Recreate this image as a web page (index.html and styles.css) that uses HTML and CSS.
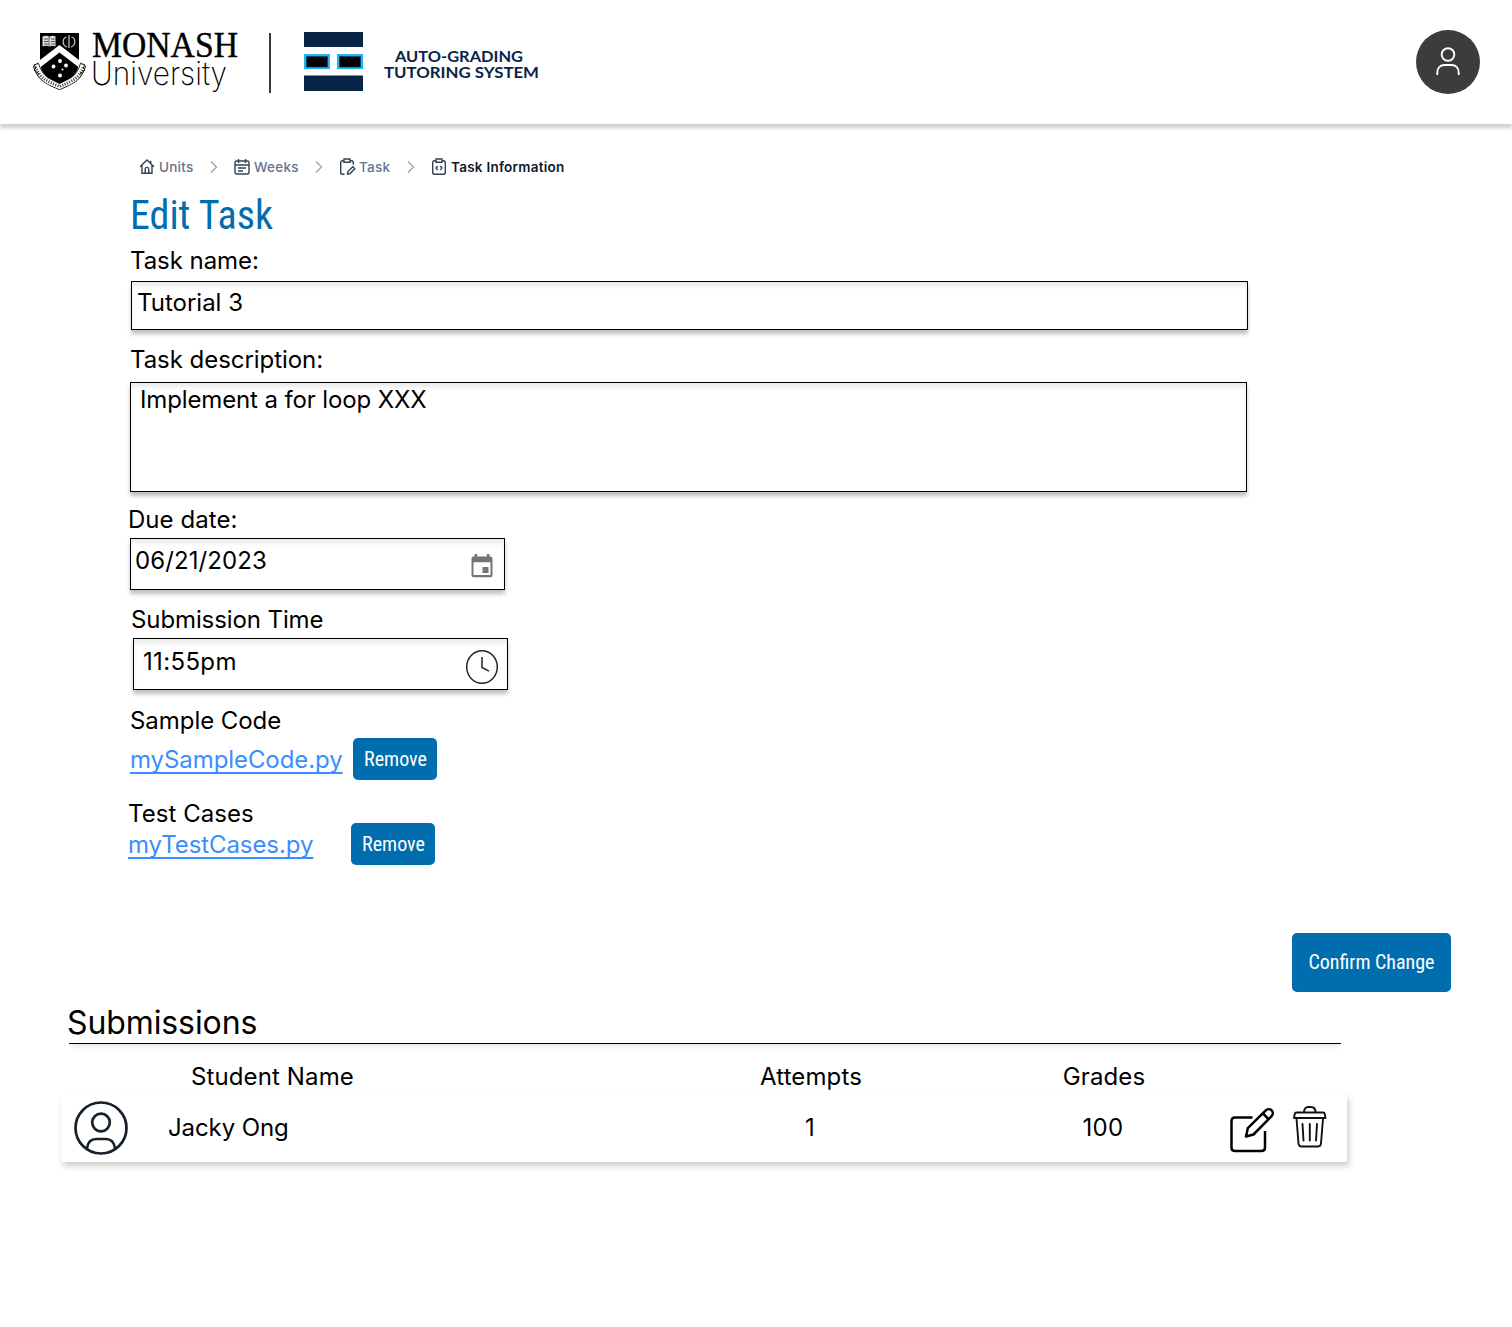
FILE: index.html
```html
<!DOCTYPE html>
<html lang="en">
<head>
<meta charset="utf-8">
<title>Edit Task</title>
<link rel="stylesheet" href="styles.css">
</head>
<body>
<header class="topbar">
  <svg class="monash" width="206" height="64" viewBox="0 0 206 64">
    <path d="M7 3h39v28c0 14-11 20-19.500 26C18 51 7 45 7 31z"/>
    <path d="M7 30 26.500 15 46 30v7.500L26.500 22.500 7 37.500z" fill="#fff"/>
    <path d="M9.500 6.500c3-1 5-1 7 .3c2-1.300 4-1.300 6-.3v10c-2-1-4-1-6 .3c-2-1.300-4-1.300-7-.3z" fill="#ddd"/>
    <path d="M16 7v10M11 9h4M11 11.500h4M11 14h4M18 9h4M18 11.500h4M18 14h4" stroke="#333" stroke-width=".8"/>
    <path d="M36 5v13M33.500 7c-4 1-5 8 .500 10M38.500 7c4 1 5 8-.500 10" fill="none" stroke="#ccc" stroke-width="1.200"/>
    <path d="M3 35C7 49 16 52 26.500 56.500C37 52 46 49 50 35" fill="none" stroke="#111" stroke-width="6.600"/>
    <path d="M3 35C7 49 16 52 26.500 56.500C37 52 46 49 50 35" fill="none" stroke="#fff" stroke-width="5"/>
    <path d="M2.500 37C7 49 16 52 26.500 56.500C37 52 46 49 50.500 37" fill="none" stroke="#333" stroke-width="3" stroke-dasharray="1 1.500"/>
    <path d="M6 33 1 35l2 3-2 2 5 4M47 33l5 2-2 3 2 2-5 4" fill="none" stroke="#111"/>
    <g fill="#fff"><circle cx="27" cy="31" r="1.900"/><circle cx="20.500" cy="36.500" r="1.900"/><circle cx="33" cy="35.500" r="1.900"/><circle cx="29.500" cy="39.500" r="1"/><circle cx="27" cy="45.500" r="2"/></g>
    <text class="monash-name" x="59" y="27" textLength="146" lengthAdjust="spacingAndGlyphs">MONASH</text>
    <text class="monash-sub" x="58" y="55" textLength="136" lengthAdjust="spacingAndGlyphs">University</text>
  </svg>
  <div class="divider"></div>
  <svg class="agts" width="236" height="60" viewBox="0 0 236 60">
    <path d="M0 0h59v15H0zM0 43.500h59V59H0z" fill="#082447"/>
    <path d="M0 22h26v15H0zM33 22h26v15H33z" fill="#19b5f5"/>
    <path d="M2.500 24.500h21v10.500H2.500zM35.500 24.500h21v10.500h-21z" stroke="#123a50" stroke-width=".6"/>
    <text class="agts-name" x="91" y="29.500" textLength="128" lengthAdjust="spacingAndGlyphs">AUTO-GRADING</text>
    <text class="agts-name" x="80" y="45.500" textLength="155" lengthAdjust="spacingAndGlyphs">TUTORING SYSTEM</text>
  </svg>
  <div class="account">
    <svg width="64" height="64" viewBox="0 0 64 64" fill="none" stroke="#fff" stroke-width="1.900"><circle cx="32" cy="24.500" r="6.300"/><path d="M21.300 45v-2.500c0-4.500 2.800-7.500 7.200-7.500h7c4.400 0 7.200 3 7.200 7.500V45"/></svg>
  </div>
</header>

<main class="page">
  <nav class="crumbs">
    <a class="crumb"><svg width="16" height="18" viewBox="0 0 16 18"><path d="M1 8.700 8 2l7 6.700M3 7v8.200h10V7M11.700 5V2.700M6.200 15v-3.800a1.800 1.800 0 0 1 3.600 0V15"/></svg><span class="w-units">Units</span></a>
    <svg class="sep" width="8" height="14" viewBox="0 0 8 14"><path d="m1 1.500 5.500 5.500L1 12.500"/></svg>
    <a class="crumb"><svg width="16" height="18" viewBox="0 0 16 18"><rect x="1" y="3" width="14" height="13" rx="1.500"/><path d="M1 7h14M4.500 1v4M11.500 1v4M4 10h8M4 13h5"/></svg><span class="w-weeks">Weeks</span></a>
    <svg class="sep" width="8" height="14" viewBox="0 0 8 14"><path d="m1 1.500 5.500 5.500L1 12.500"/></svg>
    <a class="crumb"><svg width="16" height="18" viewBox="0 0 16 18"><path d="M5 2.800H3.500Q1.700 2.800 1.700 4.600v9.800q0 1.800 1.800 1.800h2M11 2.800h1.500q1.800 0 1.800 1.800v2M5 1h6v3.300H5zM8.500 16.200l.5-2.700 4.800-4.700 2 2-4.700 4.800z"/></svg><span class="w-task">Task</span></a>
    <svg class="sep" width="8" height="14" viewBox="0 0 8 14"><path d="m1 1.500 5.500 5.500L1 12.500"/></svg>
    <a class="crumb current"><svg width="16" height="18" viewBox="0 0 16 18"><path d="M5 2.800H3.500Q1.700 2.800 1.700 4.600v9.800q0 1.800 1.800 1.800h9q1.800 0 1.800-1.800V4.600q0-1.800-1.800-1.800H11M5 1h6v3.300H5zM6.700 8 5 10l1.700 2M9.300 8 11 10l-1.700 2"/></svg><span class="w-info">Task Information</span></a>
  </nav>

  <svg class="title" width="150" height="48"><text x="0" y="34.500" textLength="143" lengthAdjust="spacingAndGlyphs">Edit Task</text></svg>

  <form class="form">
    <label class="label">Task name:</label>
    <div class="field name">Tutorial 3</div>
    <label class="label desc-label">Task description:</label>
    <div class="field desc">Implement a for loop XXX</div>
    <label class="label due-label">Due date:</label>
    <div class="field due"><span>06/21/2023</span>
      <svg width="24" height="26" viewBox="0 0 24 26" fill="#757575"><path fill-rule="evenodd" d="M4.500 1h2.700v2.500h9.600V1h2.700v2.500h1q2 0 2 2V22q0 2.200-2 2.200h-17q-2 0-2-2.200V5.500q0-2 2-2h1zM3.500 9.300V22h17V9.300zM12.500 14h6v6h-6z"/></svg>
    </div>
    <label class="label time-label">Submission Time</label>
    <div class="field time"><span>11:55pm</span>
      <svg width="34" height="36" viewBox="0 0 34 36" fill="none" stroke="#1c2630" stroke-width="1.500"><ellipse cx="17" cy="18" rx="15.300" ry="16.200"/><path d="M17 8v10.500l7 3.600"/></svg>
    </div>
    <div class="label code-label">Sample Code</div>
    <div class="file sample"><a class="link">mySampleCode.py</a>
      <button type="button" class="btn"><svg width="64" height="24"><text x="1" y="19" textLength="63" lengthAdjust="spacingAndGlyphs">Remove</text></svg></button></div>
    <div class="label cases-label">Test Cases</div>
    <div class="file cases"><a class="link">myTestCases.py</a>
      <button type="button" class="btn"><svg width="64" height="24"><text x="1" y="19" textLength="63" lengthAdjust="spacingAndGlyphs">Remove</text></svg></button></div>
  </form>

  <button type="button" class="btn confirm"><svg width="128" height="24"><text x="0.500" y="18" textLength="126" lengthAdjust="spacingAndGlyphs">Confirm Change</text></svg></button>

  <section class="submissions">
    <h2 class="sub-title">Submissions</h2>
    <div class="cols head"><span class="student-head">Student Name</span><span>Attempts</span><span>Grades</span></div>
    <div class="cols row">
      <svg class="avatar" width="56" height="56" viewBox="0 0 56 56" fill="none" stroke="#16202a" stroke-width="2.700"><circle cx="28" cy="28" r="25.500"/><circle cx="28" cy="22.500" r="8.800"/><path d="M14 49v-1c1-6 4.500-9 9-9h10c4.500 0 8 3 9 9v1"/></svg>
      <span class="student">Jacky Ong</span><span>1</span><span class="grade">100</span>
      <svg class="edit" width="46" height="46" viewBox="0 0 46 46" fill="none" stroke="#000" stroke-width="2.500" stroke-linejoin="round"><path d="M23.500 10.500H6q-3.500 0-3.500 3.500v26.500Q2.500 44 6 44h26.500q3.500 0 3.500-3.500V24"/><path d="m17 29.500 1.800-8.300L36.800 3.400a4 4 0 0 1 5.800 5.800L24.500 27.500zM34 6.500l5.800 5.800"/></svg>
      <svg class="trash" width="36" height="44" viewBox="0 0 36 44" fill="none" stroke="#111" stroke-width="1.900" stroke-linecap="round" stroke-linejoin="round"><path d="M12 7.500c0-3.500 2-5.500 4-5.500h3c2.500 0 4.500 2 4.500 5.500M4.500 7.500h26.500q1.500 0 1.800 1.500l.7 4H2l.7-4q.3-1.500 1.800-1.500zM4.500 13.500l2 25q.3 3 3 3H26q2.700 0 3-3l2-25M10.500 19l1 16.500M17.800 19v16.500M25 19l-1 16.500"/></svg>
    </div>
  </section>
</main>
</body>
</html>
```
FILE: styles.css
```css
* { box-sizing: border-box; }
body { margin: 0; min-height: 1327px; background: #fff; color: #000; font: 24px/29px Inter, "Liberation Sans", sans-serif; }
svg { display: block; flex: none; overflow: visible; }

.topbar { display: flex; align-items: flex-start; height: 124px; padding: 30px 32px 0 33px; background: #fff; box-shadow: 0 4px 4px rgba(0,0,0,.2); }
.monash-name { font: 36px "Liberation Serif", serif; stroke: #000; stroke-width: .4px; }
.monash-sub { font: 250 32px Inter, sans-serif; }
.divider { width: 2px; height: 60px; margin: 3px 33px 0 30px; background: #3a3a3a; }
.agts { margin-top: 2px; }
.agts-name { font: 700 16px Lato, sans-serif; fill: #082447; }
.account { width: 64px; height: 64px; margin-left: auto; border-radius: 50%; background: #3c3c3c; }

.page { display: flex; flex-direction: column; align-items: flex-start; padding: 33px 61px 0 128px; }
.crumbs { display: flex; align-items: center; height: 20px; margin-left: 11px; font-size: 13.5px; line-height: 20px; font-weight: 500; letter-spacing: .25px; color: #64748b; }
.crumb { display: flex; align-items: center; gap: 4px; }
.crumb svg { fill: none; stroke: #334155; stroke-width: 1.4; }
.sep { margin: 0 16px; fill: none; stroke: #94a3b8; stroke-width: 1.3; }
.w-units { width: 35px; }
.w-weeks { width: 45px; }
.w-task { width: 32px; }
.current { font-weight: 600; color: #0f172a; }
.w-info { white-space: nowrap; }

.title { margin: 17px 0 4px 2px; font: 40px "Roboto Condensed", Roboto, sans-serif; fill: #006dae; }

.form { width: 1120px; }
.label { display: block; margin-left: 2px; letter-spacing: -.05px; }
.field { display: flex; justify-content: space-between; border: 1px solid #000; background: #fff; box-shadow: 0 4px 4px rgba(0,0,0,.25), inset 0 4px 4px rgba(0,0,0,.08); }
.name { width: 1117px; height: 49px; margin: 6px 0 15px 3px; padding: 6px 5px; }
.desc { width: 1117px; height: 110px; margin: 8px 0 13px 2px; padding: 2px 9px; letter-spacing: -.13px; }
.due-label { margin-left: 0; letter-spacing: .05px; }
.due { width: 375px; height: 52px; margin: 4px 0 15px 2px; padding: 7px 10px 0 4px; letter-spacing: .1px; }
.due svg { margin-top: 7px; }
.time-label { margin-left: 3px; letter-spacing: -.1px; }
.time { width: 375px; height: 52px; margin: 4px 0 16px 5px; padding: 8px 8px 0 9px; letter-spacing: .35px; }
.time svg { margin-top: 2px; }
.file { display: flex; align-items: center; height: 42px; letter-spacing: -.08px; }
.sample { margin: 3px 0 19px 2px; }
.link { width: 223px; }
.cases-label { margin-left: 0; letter-spacing: .05px; }
.cases { margin-top: -5px; }
.link { color: #3c8dff; text-decoration: underline; text-decoration-thickness: 1.5px; text-underline-offset: 4px; text-decoration-skip-ink: none; }
.btn { display: flex; align-items: center; justify-content: center; width: 84px; height: 42px; padding: 0; border: 0; border-radius: 5px; background: #006dae; font: 20px "Roboto Condensed", Roboto, sans-serif; }
.btn svg { fill: #fff; }
.confirm { width: 159px; height: 59px; margin-top: 68px; align-self: flex-end; }

.submissions { width: 1286px; margin: 11px 0 0 -67px; }
.sub-title { height: 41px; margin: 0 6px 18px 8px; border-bottom: 1px solid #000; box-shadow: 0 6px 4px -3px rgba(0,0,0,.09); font-size: 32px; line-height: 39px; font-weight: 400; letter-spacing: -.1px; text-indent: -2px; }
.cols { display: grid; align-items: center; }
.head { grid-template-columns: 598px 304px 282px 102px; height: 29px; margin-bottom: 3px; letter-spacing: .12px; }
.cols span:not(.student):not(.student-head) { text-align: center; }
.student-head { padding-left: 130px; }
.row { grid-template-columns: 107px 491px 302px 268px 63px 55px; height: 68px; border-radius: 2px; box-shadow: 2px 4px 6px rgba(0,0,0,.2); }
.row span { margin-top: -2px; }
.student { letter-spacing: -.1px; }
.grade { padding-left: 16px; letter-spacing: .3px; }
.avatar { margin-left: 12px; }
.edit { margin-top: 4px; }
.trash { margin-top: -2px; }
```
